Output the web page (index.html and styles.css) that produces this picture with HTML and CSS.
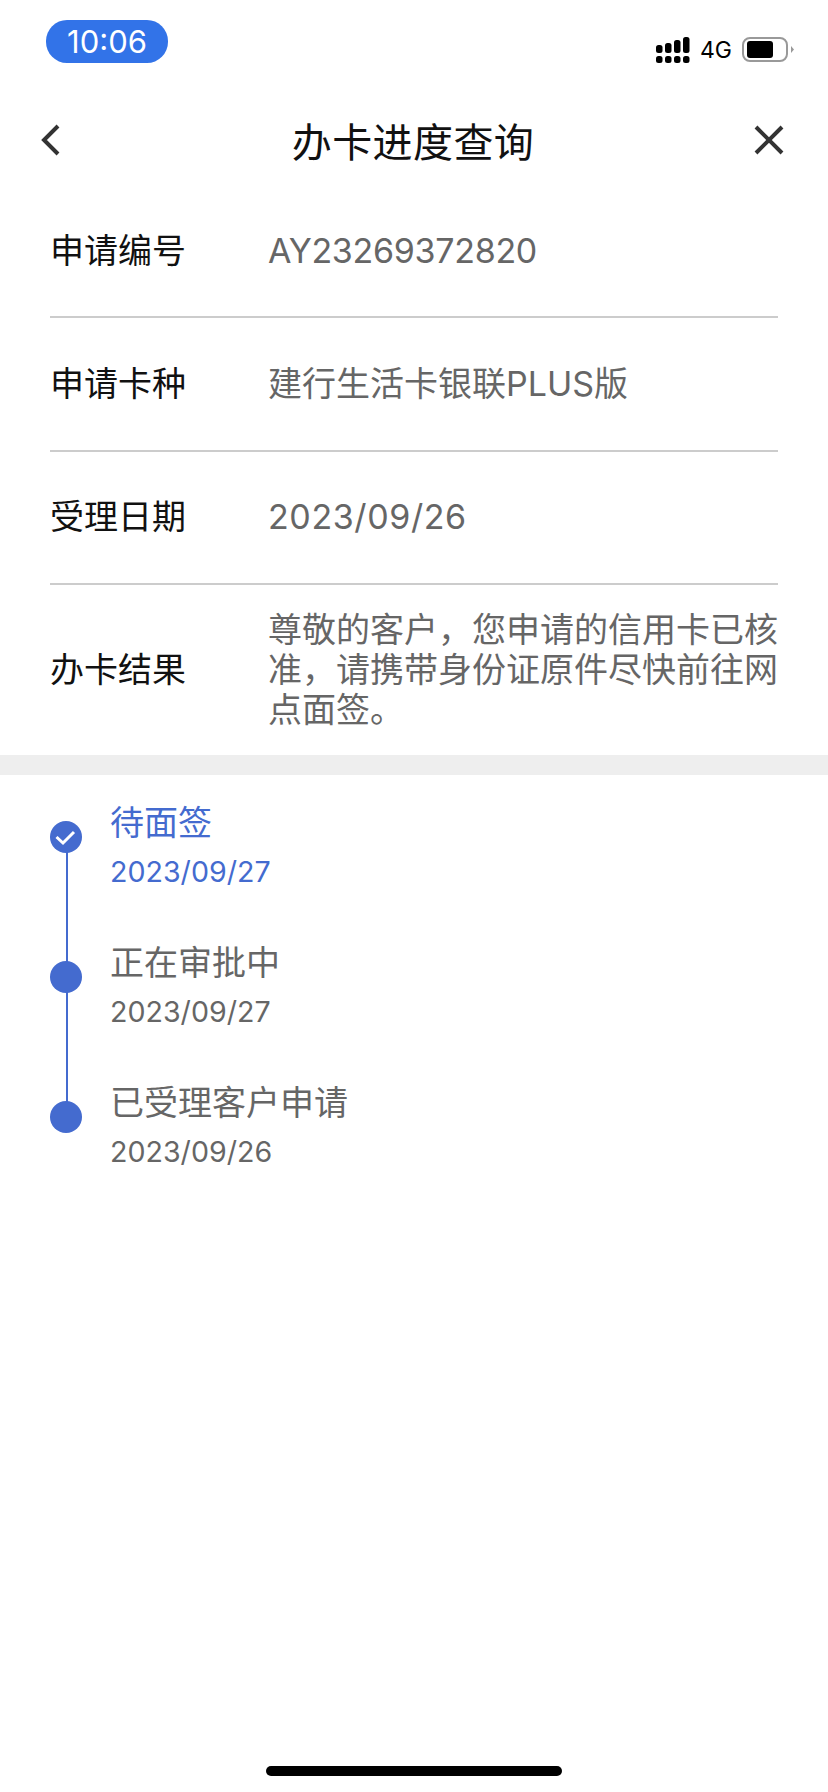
FILE: index.html
```html
<!DOCTYPE html>
<html lang="zh">
<head>
    <meta charset="UTF-8">
    <meta name="viewport" content="width=device-width, initial-scale=1.0">
    <title>办卡进度查询</title>
    <link rel="stylesheet" href="styles.css">
</head>
<body>
    <div class="status-bar">
        <div class="time-pill">10:06</div>
        <div class="status-icons">
            <svg class="signal" width="34" height="26" viewBox="0 0 34 26">
                <rect x="0" y="8" width="6.500" height="8" rx="2.500"/>
                <rect x="9" y="6" width="6.500" height="10" rx="2.500"/>
                <rect x="18" y="3" width="6.500" height="13" rx="2.500"/>
                <rect x="27" y="0" width="6.500" height="16" rx="2.500"/>
                <rect x="0" y="19" width="6.500" height="7" rx="2.500"/>
                <rect x="9" y="19" width="6.500" height="7" rx="2.500"/>
                <rect x="18" y="19" width="6.500" height="7" rx="2.500"/>
                <rect x="27" y="19" width="6.500" height="7" rx="2.500"/>
            </svg>
            <span class="network">4G</span>
            <svg class="battery" width="52" height="26" viewBox="0 0 52 26">
                <rect x="1" y="1" width="44" height="23" rx="7" fill="#fff" stroke="#999" stroke-width="2"/>
                <rect x="5" y="4" width="26" height="17" rx="3" fill="#000"/>
                <path d="M49 9l3 3.500-3 3.500z" fill="#999"/>
            </svg>
        </div>
    </div>

    <div class="nav-bar">
        <svg class="nav-back" width="24" height="34" viewBox="0 0 24 34">
            <path d="M20 3L6 17l14 14" fill="none" stroke="#333" stroke-width="4"/>
        </svg>
        <div class="nav-title">办卡进度查询</div>
        <svg class="nav-close" width="30" height="30" viewBox="0 0 30 30">
            <path d="M2 2l26 26M28 2L2 28" fill="none" stroke="#333" stroke-width="4"/>
        </svg>
    </div>

    <div class="info-list">
        <div class="info-row info-row-first">
            <div class="info-label">申请编号</div>
            <div class="info-value info-code">AY23269372820</div>
        </div>
        <div class="info-row">
            <div class="info-label">申请卡种</div>
            <div class="info-value">建行生活卡银联PLUS版</div>
        </div>
        <div class="info-row">
            <div class="info-label">受理日期</div>
            <div class="info-value info-date">2023/09/26</div>
        </div>
        <div class="info-row info-row-last">
            <div class="info-label">办卡结果</div>
            <div class="info-value">尊敬的客户，您申请的信用卡已核准，请携带身份证原件尽快前往网点面签。</div>
        </div>
    </div>

    <div class="band"></div>

    <div class="timeline">
        <div class="step step-active">
            <div class="step-dot">
                <svg width="32" height="32" viewBox="0 0 32 32">
                    <path d="M6.500 16l6.500 6 11-11" fill="none" stroke="#fff" stroke-width="3"/>
                </svg>
            </div>
            <div class="step-title">待面签</div>
            <div class="step-date">2023/09/27</div>
        </div>
        <div class="step">
            <div class="step-dot"></div>
            <div class="step-title">正在审批中</div>
            <div class="step-date">2023/09/27</div>
        </div>
        <div class="step step-last">
            <div class="step-dot"></div>
            <div class="step-title">已受理客户申请</div>
            <div class="step-date">2023/09/26</div>
        </div>
    </div>

    <div class="home-bar"></div>
</body>
</html>
```

FILE: styles.css
```css
* {
    margin: 0;
    padding: 0;
    box-sizing: border-box;
}
body {
    position: relative;
    width: 828px;
    height: 1792px;
    overflow: hidden;
    font-family: Inter, "Noto Sans CJK SC", sans-serif;
    background-color: #fff;
}
.status-bar {
    display: flex;
    justify-content: space-between;
    height: 88px;
    padding: 20px 34px 0 46px;
}
.time-pill {
    width: 122px;
    height: 43px;
    line-height: 44px;
    font-size: 31px;
    text-align: center;
    color: #fff;
    background-color: #3273e8;
    border-radius: 21px;
}
.status-icons {
    display: flex;
    align-items: center;
    gap: 10px;
    height: 26px;
    margin-top: 17px;
}
.network {
    font-size: 23px;
    color: #000;
}
.nav-bar {
    display: grid;
    grid-template-columns: 1fr auto 1fr;
    align-items: center;
    height: 104px;
    padding: 0 40px 0 38px;
}
.nav-close {
    justify-self: end;
    margin-right: 4px;
}
.nav-title {
    font-size: 40px;
    letter-spacing: 0.4px;
    color: #111;
}
.info-list {
    padding: 0 50px;
}
.info-row {
    display: flex;
    align-items: center;
    height: 133.500px;
    border-bottom: 2px solid #ccc;
}
.info-row-first {
    height: 126px;
    padding-bottom: 7px;
}
.info-row-last {
    height: 170px;
    border-bottom: none;
}
.info-label {
    width: 218px;
    font-size: 34px;
    line-height: 40px;
    color: #111;
}
.info-value {
    flex: 1;
    font-size: 34px;
    line-height: 40px;
    color: #666;
}
.info-code {
    letter-spacing: -0.3px;
}
.info-date {
    letter-spacing: 0.6px;
}
.band {
    height: 20px;
    background-color: #eee;
}
.timeline {
    padding: 26px 50px 0;
}
.step {
    position: relative;
    height: 140px;
    padding-left: 60px;
}
.step-dot {
    position: absolute;
    left: 0;
    top: 20px;
    width: 32px;
    height: 32px;
    border-radius: 50%;
    background-color: #446bcf;
}
.step::before {
    content: "";
    position: absolute;
    left: 16px;
    top: 40px;
    width: 2px;
    height: 140px;
    background-color: #446bcf;
}
.step-last::before {
    display: none;
}
.step-title {
    height: 44px;
    line-height: 44px;
    font-size: 34px;
    color: #666;
}
.step-date {
    margin-top: 7px;
    font-size: 28.600px;
    line-height: 40px;
    color: #666;
}
.step-active .step-title,
.step-active .step-date {
    color: #446bcf;
}
.home-bar {
    position: absolute;
    left: 266px;
    bottom: 16px;
    width: 296px;
    height: 10px;
    border-radius: 5px;
    background-color: #000;
}
```
